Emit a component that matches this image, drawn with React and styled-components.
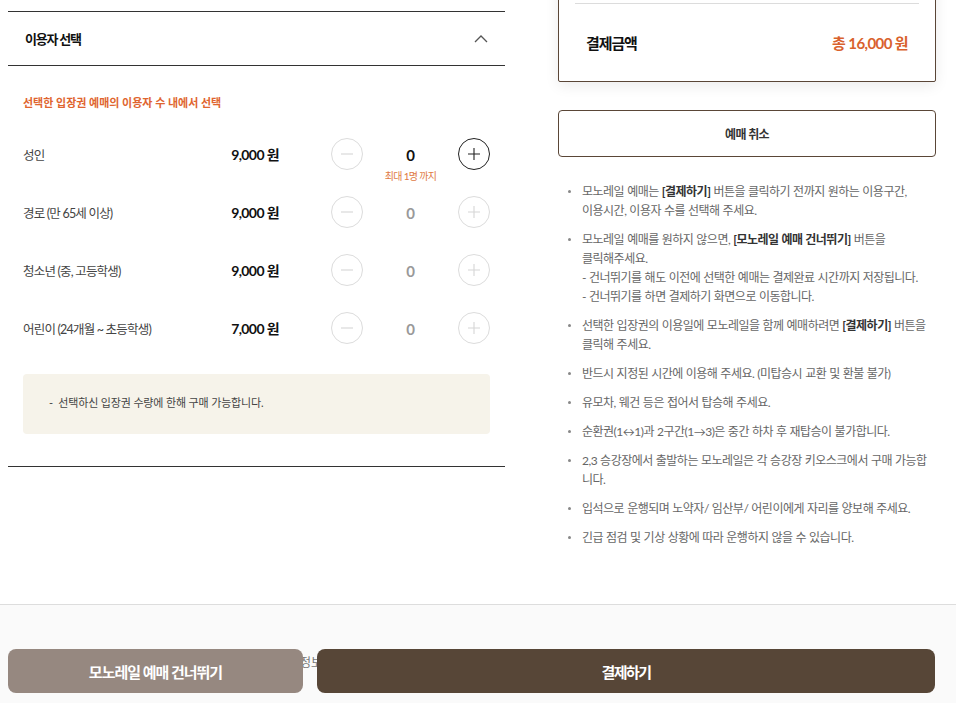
import React from "react";
import styled, { createGlobalStyle } from "styled-components";

const Global = createGlobalStyle`
  html, body { margin: 0; padding: 0; background: #fff; }
  body { font-family: "Lato", "Noto Sans CJK KR", sans-serif; color: #222; }
  * { box-sizing: border-box; }
`;

const Page = styled.div`
  width: 956px;
  height: 703px;
  overflow: hidden;
  display: flex;
  flex-direction: column;
`;

const Main = styled.div`
  height: 604px;
  display: flex;
  gap: 53px;
  padding: 0 20px 0 8px;
`;

const LeftCol = styled.section`
  width: 497px;
  padding-top: 11px;
`;

const Header = styled.div`
  height: 55px;
  border-top: 1px solid #333;
  border-bottom: 1px solid #333;
  display: flex;
  align-items: center;
  justify-content: space-between;
  padding: 0 17px 0 17px;
`;

const HeaderTitle = styled.h2`
  margin: 0;
  font-size: 13px;
  font-weight: 700;
  letter-spacing: -1.2px;
  color: #111;
`;

const Body = styled.div`
  padding: 28px 15px 32px 15px;
  border-bottom: 1px solid #333;
`;

const Guide = styled.p`
  margin: 0 0 13px;
  font-size: 11px;
  line-height: 18px;
  font-weight: 700;
  letter-spacing: 0;
  color: #e0652f;
`;

const Row = styled.div`
  height: 58px;
  display: flex;
  align-items: center;
`;

const Label = styled.span`
  flex: 1;
  font-size: 12.5px;
  color: #444;
  letter-spacing: -0.8px;
`;

const Price = styled.span`
  font-size: 14px;
  font-weight: 700;
  letter-spacing: -0.6px;
  color: #111;
`;

const Counter = styled.div`
  margin-left: 52px;
  display: flex;
  align-items: center;
`;

const Circle = styled.button`
  width: 32px;
  height: 32px;
  border-radius: 50%;
  border: 1px solid ${(p) => (p.$active ? "#222" : "#dcdcdc")};
  background: #fff;
  padding: 0;
  display: flex;
  align-items: center;
  justify-content: center;
  color: ${(p) => (p.$active ? "#222" : "#d6d6d6")};
`;

const CountCell = styled.div`
  width: 95px;
  position: relative;
  text-align: center;
`;

const Count = styled.span`
  font-size: 15px;
  font-weight: 700;
  color: ${(p) => (p.$active ? "#111" : "#999")};
`;

const Hint = styled.span`
  position: absolute;
  left: 0;
  right: 0;
  top: 23px;
  font-size: 10px;
  letter-spacing: -0.7px;
  color: #e07a44;
  text-align: center;
`;

const Note = styled.div`
  margin-top: 17px;
  height: 60px;
  border-radius: 4px;
  background: #f6f3ea;
  display: flex;
  align-items: center;
  padding: 0 0 4px 26px;
  font-size: 11px;
  letter-spacing: -0.15px;
  color: #444;
`;

const RightCol = styled.section`
  width: 378px;
  display: flex;
  flex-direction: column;
`;

const Summary = styled.div`
  margin-top: -30px;
  border: 1.5px solid #5a4637;
  border-radius: 2px;
  background: #fff;
  box-shadow: 0 4px 14px rgba(0, 0, 0, 0.08);
  padding: 32px 16px 0;
`;

const Divider = styled.div`
  height: 1px;
  background: #dcdcdc;
`;

const TotalRow = styled.div`
  height: 77px;
  display: flex;
  align-items: center;
  justify-content: space-between;
  padding: 0 11px 0 11px;
  font-size: 15px;
  font-weight: 700;
`;

const TotalLabel = styled.span`
  letter-spacing: -1.1px;
  color: #111;
`;

const TotalValue = styled.span`
  letter-spacing: -0.6px;
  color: #d9622d;
`;

const CancelButton = styled.button`
  margin-top: 28px;
  height: 47px;
  border: 1px solid #5a4637;
  border-radius: 4px;
  background: #fff;
  font-family: inherit;
  font-size: 12px;
  font-weight: 700;
  letter-spacing: -0.6px;
  color: #333;
`;

const Bullets = styled.ul`
  list-style: none;
  margin: 25px 0 0;
  padding: 0 0 0 24px;
  display: flex;
  flex-direction: column;
  gap: 10px;
`;

const Item = styled.li`
  position: relative;
  font-size: 12px;
  line-height: 19px;
  letter-spacing: -0.5px;
  word-spacing: 0.4px;
  color: #666;
  white-space: nowrap;
  &::before {
    content: "";
    position: absolute;
    left: -14px;
    top: 8px;
    width: 3px;
    height: 3px;
    border-radius: 50%;
    background: #888;
  }
`;

const Strong = styled.b`
  color: #333;
  font-weight: 700;
`;

const Footer = styled.footer`
  flex: 1;
  border-top: 1px solid #dddddd;
  background: #fafafa;
  position: relative;
`;

const Behind = styled.span`
  position: absolute;
  left: 300px;
  top: 48px;
  font-size: 12px;
  color: #777;
`;

const ButtonBar = styled.div`
  position: absolute;
  left: 8px;
  right: 21px;
  top: 44px;
  display: flex;
  gap: 14px;
`;

const ActionButton = styled.button`
  height: 44px;
  width: ${(p) => p.$w}px;
  flex: ${(p) => (p.$grow ? 1 : "none")};
  border: none;
  border-radius: 8px;
  background: ${(p) => p.$bg};
  color: #fff;
  font-family: inherit;
  font-size: 15px;
  font-weight: 700;
  letter-spacing: ${(p) => p.$ls}px;
`;

const Minus = () => (
  <svg width="14" height="14" viewBox="0 0 14 14">
    <path d="M1 7h12" stroke="currentColor" strokeWidth="1.1" />
  </svg>
);
const Plus = () => (
  <svg width="14" height="14" viewBox="0 0 14 14">
    <path d="M1 7h12M7 1v12" stroke="currentColor" strokeWidth="1.1" />
  </svg>
);
const ChevronUp = () => (
  <svg width="14" height="10" viewBox="0 0 14 10">
    <path d="M1 8l6-6 6 6" fill="none" stroke="#555" strokeWidth="1.3" />
  </svg>
);

const rows = [
  { label: "성인", price: "9,000 원", active: true },
  { label: "경로 (만 65세 이상)", price: "9,000 원" },
  { label: "청소년 (중, 고등학생)", price: "9,000 원" },
  { label: "어린이 (24개월 ~ 초등학생)", price: "7,000 원" },
];

export default function App() {
  return (
    <Page>
      <Global />
      <Main>
        <LeftCol>
          <Header>
            <HeaderTitle>이용자 선택</HeaderTitle>
            <ChevronUp />
          </Header>
          <Body>
            <Guide>선택한 입장권 예매의 이용자 수 내에서 선택</Guide>
            {rows.map((r) => (
              <Row key={r.label}>
                <Label>{r.label}</Label>
                <Price>{r.price}</Price>
                <Counter>
                  <Circle>
                    <Minus />
                  </Circle>
                  <CountCell>
                    <Count $active={r.active}>0</Count>
                    {r.active && <Hint>최대 1명 까지</Hint>}
                  </CountCell>
                  <Circle $active={r.active}>
                    <Plus />
                  </Circle>
                </Counter>
              </Row>
            ))}
            <Note>-&nbsp; 선택하신 입장권 수량에 한해 구매 가능합니다.</Note>
          </Body>
        </LeftCol>
        <RightCol>
          <Summary>
            <Divider />
            <TotalRow>
              <TotalLabel>결제금액</TotalLabel>
              <TotalValue>총 16,000 원</TotalValue>
            </TotalRow>
          </Summary>
          <CancelButton>예매 취소</CancelButton>
          <Bullets>
            <Item>
              모노레일 예매는 <Strong>[결제하기]</Strong> 버튼을 클릭하기 전까지 원하는 이용구간,
              <br />
              이용시간, 이용자 수를 선택해 주세요.
            </Item>
            <Item>
              모노레일 예매를 원하지 않으면, <Strong>[모노레일 예매 건너뛰기]</Strong> 버튼을
              <br />
              클릭해주세요.
              <br />- 건너뛰기를 해도 이전에 선택한 예매는 결제완료 시간까지 저장됩니다.
              <br />- 건너뛰기를 하면 결제하기 화면으로 이동합니다.
            </Item>
            <Item>
              선택한 입장권의 이용일에 모노레일을 함께 예매하려면 <Strong>[결제하기]</Strong> 버튼을
              <br />
              클릭해 주세요.
            </Item>
            <Item>반드시 지정된 시간에 이용해 주세요. (미탑승시 교환 및 환불 불가)</Item>
            <Item>유모차, 웨건 등은 접어서 탑승해 주세요.</Item>
            <Item>순환권(1↔1)과 2구간(1→3)은 중간 하차 후 재탑승이 불가합니다.</Item>
            <Item>
              2,3 승강장에서 출발하는 모노레일은 각 승강장 키오스크에서 구매 가능합
              <br />
              니다.
            </Item>
            <Item>입석으로 운행되며 노약자/ 임산부/ 어린이에게 자리를 양보해 주세요.</Item>
            <Item>긴급 점검 및 기상 상황에 따라 운행하지 않을 수 있습니다.</Item>
          </Bullets>
        </RightCol>
      </Main>
      <Footer>
        <Behind>정보</Behind>
        <ButtonBar>
          <ActionButton $w={295} $bg="#968880" $ls={-1}>모노레일 예매 건너뛰기</ActionButton>
          <ActionButton $grow $bg="#574637" $ls={-1.5}>결제하기</ActionButton>
        </ButtonBar>
      </Footer>
    </Page>
  );
}
